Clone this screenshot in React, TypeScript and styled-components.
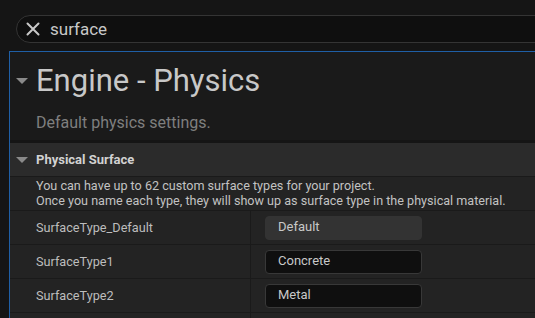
import React from 'react';
import styled, { createGlobalStyle } from 'styled-components';

const GlobalStyle = createGlobalStyle`
  html, body {
    margin: 0;
    padding: 0;
    background: #151515;
    overflow: hidden;
  }
  body {
    font-family: Roboto, "Noto Sans", sans-serif;
  }
`;

const Page = styled.div`
  width: 535px;
  height: 318px;
  overflow: hidden;
  background: #151515;
  padding-top: 15px;
  box-sizing: border-box;
`;

const SearchBar = styled.div`
  display: flex;
  align-items: center;
  gap: 10px;
  width: 620px;
  height: 28px;
  box-sizing: border-box;
  margin-left: 16px;
  padding-left: 9px;
  border: 1px solid #343434;
  border-radius: 14px;
  background: #0f0f0f;
`;

const SearchText = styled.span`
  color: #c8c8c8;
  font-size: 17px;
  line-height: 20px;
`;

const Panel = styled.div`
  margin-top: 8px;
  margin-left: 9px;
  width: 600px;
  border-left: 1px solid #1f5fa6;
  border-top: 1px solid #1f5fa6;
  background: #1a1a1a;
`;

const Header = styled.div`
  padding: 11px 0 7px;
  border-bottom: 3px solid #151515;
`;

const TitleRow = styled.div`
  display: flex;
  align-items: center;
`;

const Arrow = styled.span<{ $size: number }>`
  width: 0;
  height: 0;
  margin-left: 6px;
  margin-right: ${({ $size }) => 20 - $size}px;
  border-left: ${({ $size }) => $size / 2}px solid transparent;
  border-right: ${({ $size }) => $size / 2}px solid transparent;
  border-top: ${({ $size }) => $size / 2}px solid #8a8a8a;
`;

const Title = styled.h1`
  margin: 0;
  color: #c8c8c8;
  font-size: 31px;
  font-weight: 400;
  line-height: 36px;
`;

const Subtitle = styled.div`
  margin: 14px 0 0 26px;
  color: #7f7f7f;
  font-size: 16px;
  line-height: 20px;
`;

const Category = styled.div`
  display: flex;
  align-items: center;
  height: 33px;
  background: #2b2b2b;
  border-bottom: 1px solid #1a1a1a;
`;

const CategoryTitle = styled.span`
  color: #d2d2d2;
  font-size: 13px;
  font-weight: 700;
  line-height: 16px;
`;

const Description = styled.div`
  padding: 1px 0 2px 26px;
  background: #232323;
  color: #c2c2c2;
  font-size: 12.6px;
  line-height: 15px;
  border-bottom: 1px solid #1a1a1a;
`;

const PropRow = styled.div`
  display: grid;
  grid-template-columns: 241px 1fr;
  height: 33px;
  background: #232323;
  border-bottom: 1px solid #1a1a1a;
`;

const NameCell = styled.div`
  display: flex;
  align-items: center;
  padding-left: 26px;
  color: #bdbdbd;
  font-size: 12.7px;
  border-right: 1px solid #1a1a1a;
`;

const ValueCell = styled.div`
  display: flex;
  align-items: center;
  padding-left: 14px;
`;

const ValueBox = styled.div<{ $readOnly?: boolean }>`
  width: 157px;
  height: 24px;
  box-sizing: border-box;
  padding: 2px 0 0 12px;
  border-radius: 4px;
  border: 1px solid ${({ $readOnly }) => ($readOnly ? '#333333' : '#383838')};
  background: ${({ $readOnly }) => ($readOnly ? '#333333' : '#0f0f0f')};
  color: #c8c8c8;
  font-size: 13px;
  line-height: 16px;
`;

const surfaceTypes = [
  { name: 'SurfaceType_Default', value: 'Default', readOnly: true },
  { name: 'SurfaceType1', value: 'Concrete' },
  { name: 'SurfaceType2', value: 'Metal' },
  { name: 'SurfaceType3', value: '' },
];

const CloseIcon = () => (
  <svg width="14" height="14" viewBox="0 0 14 14">
    <path d="M1.5 1.5 L12.5 12.5 M12.5 1.5 L1.5 12.5" stroke="#c8c8c8" strokeWidth="2" strokeLinecap="round" />
  </svg>
);

export default function App() {
  return (
    <Page>
      <GlobalStyle />
      <SearchBar>
        <CloseIcon />
        <SearchText>surface</SearchText>
      </SearchBar>
      <Panel>
        <Header>
          <TitleRow>
            <Arrow $size={12} />
            <Title>Engine - Physics</Title>
          </TitleRow>
          <Subtitle>Default physics settings.</Subtitle>
        </Header>
        <Category>
          <Arrow $size={12} />
          <CategoryTitle>Physical Surface</CategoryTitle>
        </Category>
        <Description>
          You can have up to 62 custom surface types for your project.
          <br />
          Once you name each type, they will show up as surface type in the physical material.
        </Description>
        {surfaceTypes.map(item => (
          <PropRow key={item.name}>
            <NameCell>{item.name}</NameCell>
            <ValueCell>
              <ValueBox $readOnly={item.readOnly}>{item.value}</ValueBox>
            </ValueCell>
          </PropRow>
        ))}
      </Panel>
    </Page>
  );
}
